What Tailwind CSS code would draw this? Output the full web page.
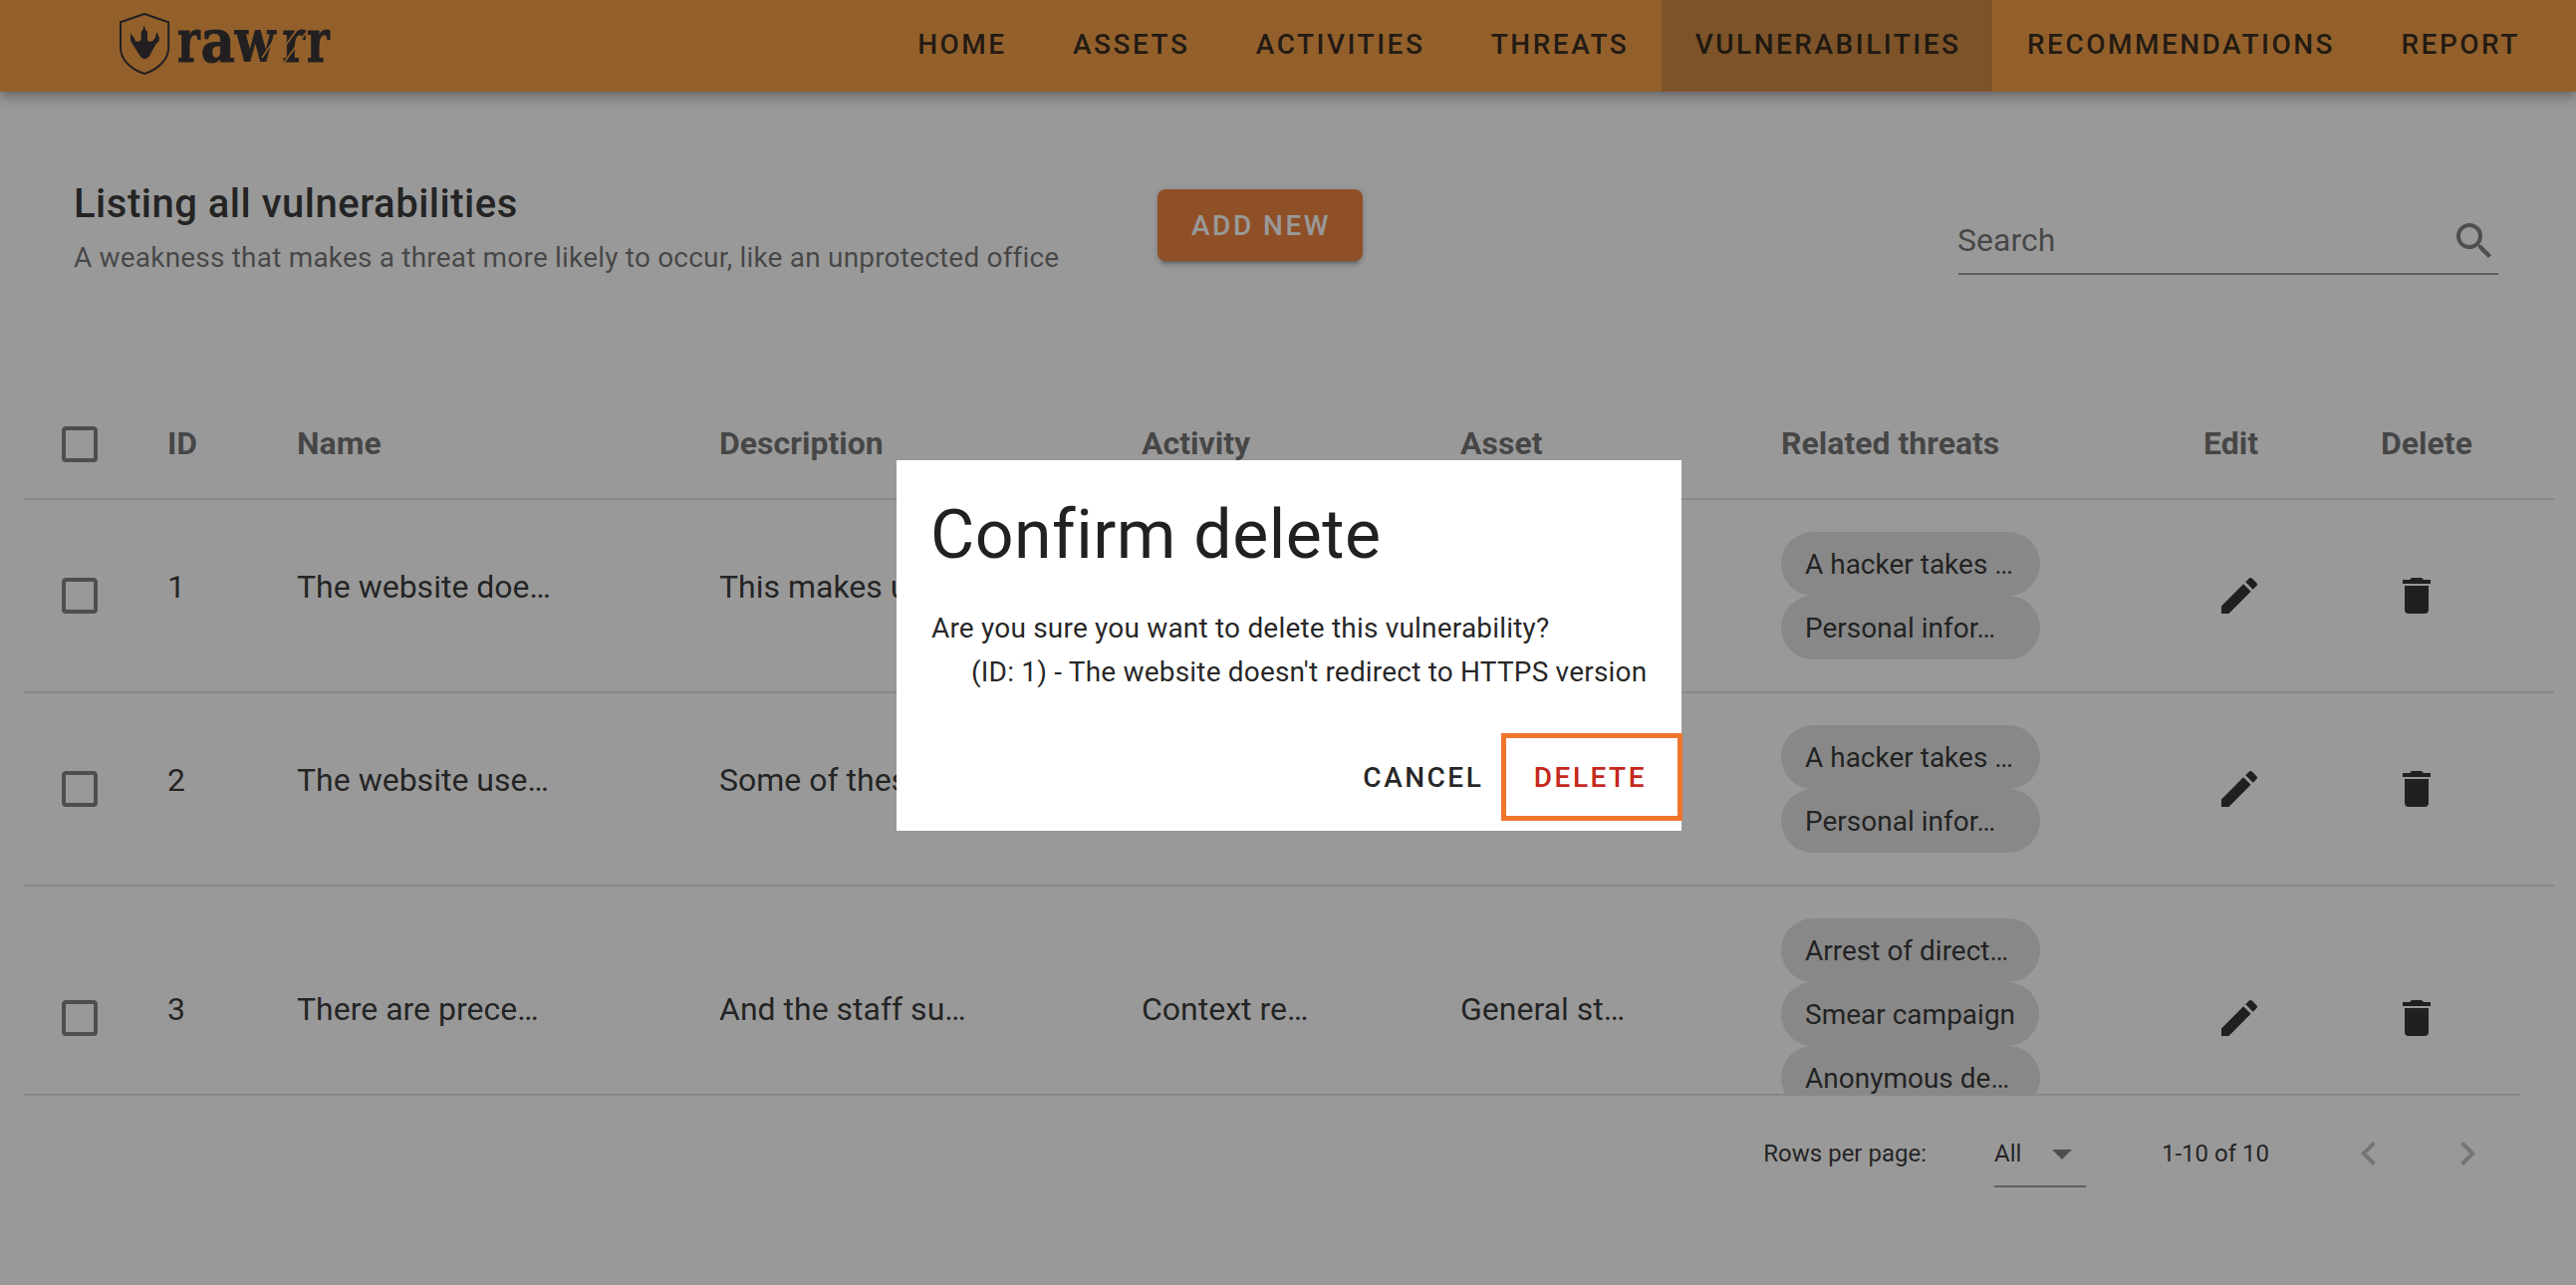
<!DOCTYPE html>
<html lang="en">
<head>
<meta charset="utf-8">
<title>Vulnerabilities</title>
<script src="https://cdn.jsdelivr.net/npm/@tailwindcss/browser@4"></script>
</head>
<body class="font-['Roboto',sans-serif] text-black/87">
<svg class="hidden">
  <symbol id="box" viewBox="0 0 24 24"><path fill="currentColor" d="M19,3H5C3.89,3 3,3.89 3,5V19A2,2 0 0,0 5,21H19A2,2 0 0,0 21,19V5C21,3.89 20.1,3 19,3M19,5V19H5V5H19Z"/></symbol>
  <symbol id="pencil" viewBox="0 0 24 24"><path fill="currentColor" d="M20.71,7.04C21.1,6.65 21.1,6 20.71,5.63L18.37,3.29C18,2.9 17.35,2.9 16.96,3.29L15.12,5.12L18.87,8.87M3,17.25V21H6.75L17.81,9.93L14.06,6.18L3,17.25Z"/></symbol>
  <symbol id="trash" viewBox="0 0 24 24"><path fill="currentColor" d="M19,4H15.5L14.5,3H9.5L8.5,4H5V6H19M6,19A2,2 0 0,0 8,21H16A2,2 0 0,0 18,19V7H6V19Z"/></symbol>
</svg>
<div class="relative w-[2586px] h-[1290px] overflow-hidden bg-white flex flex-col">
  <header class="relative z-10 h-[92px] shrink-0 bg-[#f49637] flex justify-between pl-[116px] pr-[24.8px] shadow-[0_4px_8px_-2px_rgba(0,0,0,.2),0_8px_10px_0_rgba(0,0,0,.14),0_2px_20px_0_rgba(0,0,0,.12)]">
    <svg class="w-[224px] h-[92px] text-[#231f20]" viewBox="116 0 224 92">
      <!-- shield and claw -->
      <path fill="none" stroke="currentColor" stroke-width="2" stroke-linejoin="round" d="M145 14 L169.2 22.2 V48 C169.2 60 158 70 145 74 C132 70 121 60 121 48 V22.2 Z"/>
      <path fill="currentColor" d="M144.7 25.3 L146.3 30.5 L148 31.8 V40 L149.5 42 L153.5 41 L156 37.5 L156.2 35.5 L158 32 L158.8 36 L160 37 L159.5 41.5 L157 43.5 L149.5 57 Q145.5 61 141.5 57.5 L132.5 43.5 L131 40.5 V33.5 L135 38.5 L136 41.5 L140.5 41.5 L141.7 39 V31.5 L143.2 30.5 Z"/>
      <!-- wordmark -->
      <g fill="currentColor" stroke="currentColor" stroke-width="1" font-family="DejaVu Serif" font-weight="700" font-size="59">
        <text transform="translate(178 62.3) scale(.73 1)">r</text>
        <text transform="translate(201.5 62.3) scale(.9 1)">a</text>
        <text transform="translate(235.8 62.3) scale(.8 1)">w</text>
        <text transform="translate(283.4 62.3) scale(.73 1)">r</text>
        <text transform="translate(308 62.3) scale(.73 1)">r</text>
      </g>
      <path fill="none" stroke="#f49637" stroke-width="1.6" d="M284 27 L263 58 M300 27 L285 48 M307 33 L285 63"/>
    </svg>
    <nav class="flex gap-[1.4px] text-[28px] leading-[90px] font-medium tracking-[.0892857143em]">
      <a class="pl-[33.6px] pr-[31.4px]">HOME</a><a class="pl-[33.6px] pr-[31.4px]">ASSETS</a><a class="pl-[33.6px] pr-[31.4px]">ACTIVITIES</a><a class="pl-[33.6px] pr-[31.4px]">THREATS</a><a class="pl-[33.6px] pr-[31.4px] bg-[#cb7e30]">VULNERABILITIES</a><a class="pl-[33.6px] pr-[31.4px]">RECOMMENDATIONS</a><a class="pl-[33.6px] pr-[31.4px]">REPORT</a>
    </nav>
  </header>

  <section class="h-[298px] shrink-0 flex pl-[74px] pr-[78px] pt-20">
    <div class="w-[1088px] pt-px">
      <h1 class="text-[40px] leading-16 font-medium tracking-[.0125em]">Listing all vulnerabilities</h1>
      <p class="text-[28px] leading-11 text-black/60 tracking-[.0068em]">A weakness that makes a threat more likely to occur, like an unprotected office</p>
    </div>
    <button class="mt-[18px] w-[206px] h-[72px] pt-[2px] pl-[2px] rounded-lg bg-[#ee782e] text-white text-[28px] font-medium tracking-[.0892857143em] shadow-[0_6px_2px_-4px_rgba(0,0,0,.2),0_4px_4px_0_rgba(0,0,0,.14),0_2px_10px_0_rgba(0,0,0,.12)]">ADD NEW</button>
    <div class="ml-auto mt-[38px] w-[542px] h-[66px] border-b-2 border-black/42 flex justify-between text-black/60">
      <span class="-ml-px text-[32px] leading-[62px]">Search</span>
      <svg class="size-12 mt-2 text-black/54" viewBox="0 0 24 24"><path fill="currentColor" d="M9.5,3A6.5,6.5 0 0,1 16,9.5C16,11.11 15.41,12.59 14.44,13.73L14.71,14H15.5L20.5,19L19,20.5L14,15.5V14.71L13.73,14.44C12.59,15.41 11.11,16 9.5,16A6.5,6.5 0 0,1 3,9.5A6.5,6.5 0 0,1 9.5,3M9.5,5C7,5 5,7 5,9.5C5,12 7,14 9.5,14C12,14 14,12 14,9.5C14,7 12,5 9.5,5Z"/></svg>
    </div>
  </section>

  <main class="h-[708px] shrink-0 overflow-hidden ml-6 w-[2540px] text-[32px] leading-12">
    <div class="grid grid-cols-[112px_130px_424px_424px_320px_322px_424px_178px_206px] h-28 border-b-2 border-black/12 items-center font-bold text-black/60">
      <svg class="size-12 ml-8 mt-0.5 text-black/54"><use href="#box"/></svg>
      <div class="pl-8">ID</div><div class="pl-8">Name</div><div class="pl-8">Description</div><div class="pl-8">Activity</div><div class="pl-8">Asset</div><div class="pl-8">Related threats</div><div class="pl-8">Edit</div><div class="pl-8">Delete</div>
    </div>
    <div class="grid grid-cols-[112px_130px_424px_424px_320px_322px_424px_178px_206px] h-[194px] border-b-2 border-black/12 items-center">
      <svg class="size-12 ml-8 text-black/54"><use href="#box"/></svg>
      <div class="pl-8 pb-[18px]">1</div><div class="pl-8 pb-[18px]">The website doe…</div><div class="pl-8 pb-[18px]">This makes u…</div><div class="pl-8 pb-[18px]"></div><div class="pl-8 pb-[18px]"></div>
      <div class="pl-8 flex flex-col items-start text-[28px] leading-[66px]"><span class="h-16 w-[260px] px-6 rounded-full bg-[#e0e0e0]">A hacker takes …</span><span class="h-16 w-[260px] px-6 rounded-full bg-[#e0e0e0]">Personal infor…</span></div>
      <svg class="size-12 ml-11"><use href="#pencil"/></svg><svg class="size-12 ml-11"><use href="#trash"/></svg>
    </div>
    <div class="grid grid-cols-[112px_130px_424px_424px_320px_322px_424px_178px_206px] h-[194px] border-b-2 border-black/12 items-center">
      <svg class="size-12 ml-8 text-black/54"><use href="#box"/></svg>
      <div class="pl-8 pb-[18px]">2</div><div class="pl-8 pb-[18px]">The website use…</div><div class="pl-8 pb-[18px]">Some of these…</div><div class="pl-8 pb-[18px]"></div><div class="pl-8 pb-[18px]"></div>
      <div class="pl-8 flex flex-col items-start text-[28px] leading-[66px]"><span class="h-16 w-[260px] px-6 rounded-full bg-[#e0e0e0]">A hacker takes …</span><span class="h-16 w-[260px] px-6 rounded-full bg-[#e0e0e0]">Personal infor…</span></div>
      <svg class="size-12 ml-11"><use href="#pencil"/></svg><svg class="size-12 ml-11"><use href="#trash"/></svg>
    </div>
    <div class="grid grid-cols-[112px_130px_424px_424px_320px_322px_424px_178px_206px] h-[264px] items-center">
      <svg class="size-12 ml-8 text-black/54"><use href="#box"/></svg>
      <div class="pl-8 pb-[18px]">3</div><div class="pl-8 pb-[18px]">There are prece…</div><div class="pl-8 pb-[18px]">And the staff su…</div><div class="pl-8 pb-[18px]">Context re…</div><div class="pl-8 pb-[18px]">General st…</div>
      <div class="pl-8 h-[200px] flex flex-col items-start text-[28px] leading-[66px]"><span class="h-16 w-[260px] px-6 rounded-full bg-[#e0e0e0]">Arrest of direct…</span><span class="h-16 px-6 rounded-full bg-[#e0e0e0]">Smear campaign</span><span class="h-16 w-[260px] px-6 rounded-full bg-[#e0e0e0]">Anonymous de…</span></div>
      <svg class="size-12 ml-11"><use href="#pencil"/></svg><svg class="size-12 ml-11"><use href="#trash"/></svg>
    </div>
  </main>

  <footer class="ml-6 w-[2506px] h-[118px] shrink-0 border-t-2 border-black/12 flex items-center justify-end text-2xl leading-none">
    <span>Rows per page:</span>
    <div class="ml-[68px] mr-[76px] mt-2 w-[92px] h-[60px] border-b-2 border-black/42 flex items-center justify-between">
      <span class="-mt-1.5">All</span>
      <svg class="size-12 -mt-1.5 text-black/54" viewBox="0 0 24 24"><path fill="currentColor" d="M7,10L12,15L17,10H7Z"/></svg>
    </div>
    <span>1-10 of 10</span>
    <svg class="size-12 ml-[76px] text-black/26" viewBox="0 0 24 24"><path fill="currentColor" d="M15.41,16.58L10.83,12L15.41,7.41L14,6L8,12L14,18L15.41,16.58Z"/></svg>
    <svg class="size-12 ml-[51px] mr-[29px] text-black/26" viewBox="0 0 24 24"><path fill="currentColor" d="M8.59,16.58L13.17,12L8.59,7.41L10,6L16,12L10,18L8.59,16.58Z"/></svg>
  </footer>

  <!-- scrim -->
  <div class="absolute inset-0 z-20 bg-[#212121]/46"></div>

  <div class="absolute z-30 left-[900px] top-[462px] w-[788px] h-[372px] bg-white pt-8 flex flex-col">
    <h2 class="pl-[34px] text-[68px] leading-[86px] tracking-[.0073529412em]">Confirm delete</h2>
    <div class="pl-[35px] pt-[29px] text-[28px] leading-11 tracking-[.0068em] whitespace-nowrap"><p>Are you sure you want to delete this vulnerability?</p><p class="pl-10">(ID: 1) - The website doesn't redirect to HTTPS version</p></div>
    <div class="mt-12 flex justify-end pr-[35px] text-[28px] leading-[72px] font-medium tracking-[.0892857143em]"><span class="mr-[50.5px]">CANCEL</span><span class="text-[#c5281c]">DELETE</span></div>
    <div class="absolute left-[607px] top-[274px] w-[182px] h-[88px] border-5 border-[#f0752d]"></div>
  </div>
</div>
</body>
</html>
